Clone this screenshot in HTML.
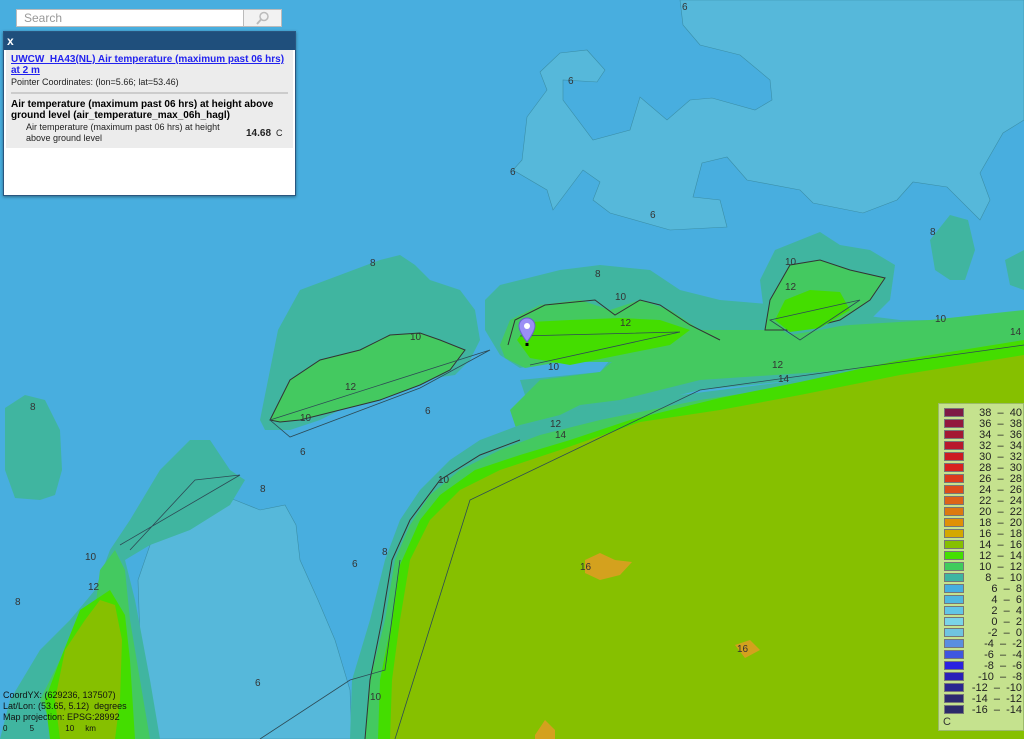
<!DOCTYPE html>
<html><head><meta charset="utf-8"><style>
html,body{margin:0;padding:0;width:1024px;height:739px;overflow:hidden;background:#48aedf;font-family:"Liberation Sans",sans-serif}
svg.map{position:absolute;left:0;top:0}
.search{position:absolute;left:16px;top:9px;width:219px;height:16px;border:1px solid #bbb;background:#fff;font-size:12px;color:#999;line-height:16px;padding-left:7px;box-sizing:content-box}
.sbtn{position:absolute;left:243px;top:9px;width:37px;height:16px;border:1px solid #bbb;background:#f2f2f2}
.pop{position:absolute;left:3px;top:31px;width:291px;height:163px;background:#fff;border:1px solid #2a5680;box-shadow:0 1px 3px rgba(0,0,0,.4)}
.pop .hd{height:18px;background:#1f4f7c;color:#fff;font-weight:bold;font-size:12px;line-height:18px;padding-left:3px}
.pop .bd{margin:0 2px;background:#ececec;padding:4px 5px 4px;font-size:9px;color:#222}
.pop a{color:#2222ee;font-weight:bold;font-size:10px;text-decoration:underline;line-height:11px;display:block}
.pop hr{border:0;border-top:2px solid #ccc;margin:4px 0 5px}
.pop b.t{font-size:10px;line-height:11px;display:block;color:#000}
.row{display:flex;align-items:center;padding-left:15px;line-height:11px;margin-top:1px;font-size:9px}
.leg{position:absolute;left:938px;top:403px;width:86px;height:328px;background:#c5e28e;border:1px solid #9bbb6a;box-sizing:border-box}
.leg .r{position:absolute;left:5px;width:78px;height:10px;font-size:11px;line-height:10px;color:#222}
.leg .r i{position:absolute;left:0;top:0;width:20px;height:9px;border:1px solid #777;box-sizing:border-box}
.leg .r span{position:absolute;right:0;top:0;white-space:pre;font-family:"Liberation Sans",sans-serif}
.info{position:absolute;left:3px;top:690px;font-size:9px;line-height:11px;color:#111}
</style></head><body>
<svg class="map" width="1024" height="739" viewBox="0 0 1024 739">
<rect width="1024" height="739" fill="#48aedf"/>
<path d="M680,0 683,25 700,45 740,55 770,80 772,100 755,110 712,98 690,100 667,120 640,97 630,130 593,140 563,100 563,80 597,82 605,70 587,50 560,53 540,72 547,90 527,117 522,160 513,170 547,190 553,210 583,170 600,182 593,200 610,213 670,230 727,227 720,200 693,197 702,163 727,157 747,180 800,190 813,203 863,213 897,200 913,182 947,187 980,220 990,200 980,173 1003,133 1024,120 1024,0Z" fill="#56b8da" stroke="#3b8fa8" stroke-width=".6"/>
<path d="M195,505 215,495 235,500 260,510 285,505 296,525 300,560 318,600 335,640 350,690 352,739 130,739 135,700 140,640 138,580 150,545 172,520Z" fill="#56b8da" stroke="#3b8fa8" stroke-width=".6"/>
<path d="M5,408 25,395 45,400 60,430 62,470 55,495 40,500 15,498 5,470Z" fill="#40b5a0"/>
<path d="M260,420 268,380 278,330 300,290 340,275 380,260 400,255 415,265 430,280 460,290 475,310 480,340 470,360 455,375 420,380 390,395 350,405 320,420 290,430 265,430Z" fill="#40b5a0"/>
<path d="M270,420 290,380 320,360 360,350 390,335 420,333 440,340 465,350 450,370 420,385 380,400 340,410 300,420 280,422Z" fill="#44c960" stroke="#333" stroke-width="1"/>
<path d="M485,300 500,285 560,270 600,265 650,270 680,290 720,300 780,305 820,310 900,320 1024,320 1024,360 940,370 800,380 700,390 620,410 560,420 540,408 525,395 520,380 600,372 610,360 560,360 520,368 500,355 485,330Z" fill="#40b5a0"/>
<path d="M500,345 510,320 540,305 580,300 610,310 640,300 670,310 700,330 750,330 800,330 850,325 930,320 1024,310 1024,345 950,360 850,370 700,380 620,400 580,405 550,420 520,440 510,410 540,380 600,372 612,362 560,362 525,368 505,358Z" fill="#44c960"/>
<path d="M517,340 530,322 570,320 620,318 660,320 690,330 670,345 620,355 570,365 530,358Z" fill="#44dd00"/>
<path d="M508,345 515,320 545,305 595,300 615,315 640,300 660,305 690,325 720,340" fill="none" stroke="#333" stroke-width="1"/>
<path d="M760,280 775,250 800,240 820,232 840,245 870,250 895,265 890,300 870,320 820,330 790,335 765,320Z" fill="#40b5a0"/>
<path d="M765,330 770,300 790,265 820,260 850,270 885,278 870,300 840,320 800,330Z" fill="#44c960" stroke="#333" stroke-width="1"/>
<path d="M775,320 785,300 810,290 840,292 850,310 820,328 790,332Z" fill="#44dd00"/>
<path d="M930,240 950,215 968,220 975,250 965,280 950,280 935,270Z" fill="#40b5a0"/>
<path d="M1005,260 1024,250 1024,290 1010,285Z" fill="#40b5a0"/>
<path d="M230,470 210,440 190,440 160,470 130,520 110,550 95,590 70,620 40,650 10,700 0,739 160,739 150,680 135,600 125,560 150,545 190,530 230,505 245,480Z" fill="#40b5a0"/>
<path d="M60,739 40,700 70,640 95,610 100,570 115,550 125,570 130,620 140,680 150,739Z" fill="#44c960"/>
<path d="M50,739 45,700 60,660 80,610 95,600 110,590 125,615 130,660 135,739Z" fill="#44dd00"/>
<path d="M60,739 55,700 65,650 85,620 100,600 115,605 122,640 120,700 115,739Z" fill="#86c000"/>
<path d="M350,739 352,680 370,620 385,560 400,520 420,490 450,460 480,440 520,425 560,415 640,400 720,390 800,380 900,365 1024,345 1024,739Z" fill="#40b5a0"/>
<path d="M365,739 370,680 385,620 395,560 410,525 430,495 460,470 500,450 540,435 600,420 700,400 800,385 900,370 1024,350 1024,739Z" fill="#44c960"/>
<path d="M378,739 380,680 392,620 400,565 420,520 440,495 475,470 520,455 570,440 630,420 720,398 800,382 900,360 1024,340 1024,739Z" fill="#44dd00"/>
<path d="M390,739 392,680 400,620 410,560 430,520 460,490 500,470 560,450 640,422 720,410 800,395 900,375 1024,355 1024,739Z" fill="#86c000"/>
<path d="M365,739 370,680 382,620 392,560 410,520 440,480 480,455 520,440" fill="none" stroke="#333" stroke-width="1"/>
<path d="M585,560 600,553 615,560 632,562 620,575 600,580 585,573Z" fill="#d4a11e"/>
<path d="M735,645 750,640 760,650 745,658Z" fill="#d4a11e"/>
<path d="M535,735 545,720 555,730 555,739 535,739Z" fill="#d4a11e"/>
<g fill="none" stroke="#2d4a55" stroke-width=".8">
<path d="M270,420 490,350 420,388 290,437Z"/>
<path d="M120,545 240,475 195,480 130,550"/>
<path d="M395,739 470,500 700,390 1024,345"/>
<path d="M520,336 680,332 530,365"/>
<path d="M770,320 860,300 800,340Z"/>
<path d="M260,739 350,680 385,670 400,560"/>
</g>
<g font-size="10" fill="#333" font-family="Liberation Sans,sans-serif">
<text x="370" y="266">8</text><text x="410" y="340">10</text><text x="300" y="421">10</text><text x="345" y="390">12</text>
<text x="595" y="277">8</text><text x="615" y="300">10</text><text x="620" y="326">12</text><text x="548" y="370">10</text>
<text x="785" y="265">10</text><text x="785" y="290">12</text><text x="935" y="322">10</text><text x="772" y="368">12</text><text x="778" y="382">14</text>
<text x="550" y="427">12</text><text x="555" y="438">14</text><text x="438" y="483">10</text>
<text x="650" y="218">6</text><text x="568" y="84">6</text><text x="510" y="175">6</text><text x="682" y="10">6</text>
<text x="30" y="410">8</text><text x="425" y="414">6</text><text x="300" y="455">6</text><text x="260" y="492">8</text>
<text x="85" y="560">10</text><text x="88" y="590">12</text><text x="15" y="605">8</text>
<text x="352" y="567">6</text><text x="382" y="555">8</text><text x="255" y="686">6</text><text x="370" y="700">10</text>
<text x="580" y="570">16</text><text x="737" y="652">16</text><text x="930" y="235">8</text><text x="1010" y="335">14</text>
</g>
<path d="M527,318c-5,0-8,4-8,8c0,6,8,16,8,16s8-10,8-16c0-4-3-8-8-8z" fill="#9b8ff5" stroke="#6a5fd0" stroke-width="1"/>
<circle cx="527" cy="326" r="3" fill="#fff"/><rect x="525.5" y="343" width="3" height="3" fill="#000"/>
</svg>
<div class="search">Search</div>
<div class="sbtn"><svg width="37" height="16"><circle cx="20" cy="6.5" r="4" fill="none" stroke="#bbb" stroke-width="1.5"/><path d="M17,9.5 13,14" stroke="#bbb" stroke-width="2"/></svg></div>
<div class="pop"><div class="hd">x</div>
<div class="bd"><a>UWCW_HA43(NL) Air temperature (maximum past 06 hrs) at 2 m</a>
<div style="line-height:12px">Pointer Coordinates: (lon=5.66; lat=53.46)</div><hr>
<b class="t">Air temperature (maximum past 06 hrs) at height above ground level (air_temperature_max_06h_hagl)</b>
<div class="row"><div style="width:220px">Air temperature (maximum past 06 hrs) at height above ground level</div><b style="font-size:10px">14.68</b>&nbsp;&nbsp;C</div>
</div></div>
<div class="leg">
<div class="r" style="top:4px"><i style="background:#7d1a45"></i><span>38  –  40</span></div>
<div class="r" style="top:15px"><i style="background:#92183d"></i><span>36  –  38</span></div>
<div class="r" style="top:26px"><i style="background:#a31833"></i><span>34  –  36</span></div>
<div class="r" style="top:37px"><i style="background:#b8182c"></i><span>32  –  34</span></div>
<div class="r" style="top:48px"><i style="background:#cc1a22"></i><span>30  –  32</span></div>
<div class="r" style="top:59px"><i style="background:#d8221e"></i><span>28  –  30</span></div>
<div class="r" style="top:70px"><i style="background:#dc3a1c"></i><span>26  –  28</span></div>
<div class="r" style="top:81px"><i style="background:#dc4e1a"></i><span>24  –  26</span></div>
<div class="r" style="top:92px"><i style="background:#dc6418"></i><span>22  –  24</span></div>
<div class="r" style="top:103px"><i style="background:#dc7a10"></i><span>20  –  22</span></div>
<div class="r" style="top:114px"><i style="background:#e09006"></i><span>18  –  20</span></div>
<div class="r" style="top:125px"><i style="background:#d4a800"></i><span>16  –  18</span></div>
<div class="r" style="top:136px"><i style="background:#86c000"></i><span>14  –  16</span></div>
<div class="r" style="top:147px"><i style="background:#44e000"></i><span>12  –  14</span></div>
<div class="r" style="top:158px"><i style="background:#40cc5c"></i><span>10  –  12</span></div>
<div class="r" style="top:169px"><i style="background:#3eb5a2"></i><span>8  –  10</span></div>
<div class="r" style="top:180px"><i style="background:#46aee0"></i><span>6  –  8</span></div>
<div class="r" style="top:191px"><i style="background:#50b8df"></i><span>4  –  6</span></div>
<div class="r" style="top:202px"><i style="background:#62c6e6"></i><span>2  –  4</span></div>
<div class="r" style="top:213px"><i style="background:#7ad4e8"></i><span>0  –  2</span></div>
<div class="r" style="top:224px"><i style="background:#70c4e0"></i><span>-2  –  0</span></div>
<div class="r" style="top:235px"><i style="background:#5a8ee0"></i><span>-4  –  -2</span></div>
<div class="r" style="top:246px"><i style="background:#3e56e0"></i><span>-6  –  -4</span></div>
<div class="r" style="top:257px"><i style="background:#2a22e0"></i><span>-8  –  -6</span></div>
<div class="r" style="top:268px"><i style="background:#2a20b8"></i><span>-10  –  -8</span></div>
<div class="r" style="top:279px"><i style="background:#2a2690"></i><span>-12  –  -10</span></div>
<div class="r" style="top:290px"><i style="background:#2c2a70"></i><span>-14  –  -12</span></div>
<div class="r" style="top:301px"><i style="background:#2c2a6a"></i><span>-16  –  -14</span></div>
<div style="position:absolute;left:4px;top:312px;font-size:11px;color:#333">C</div>
</div>
<div class="info">CoordYX: (629236, 137507)<br>Lat/Lon: (53.65, 5.12)&nbsp; degrees<br>Map projection: EPSG:28992<br><span style="font-size:8px">0&nbsp;&nbsp;&nbsp;&nbsp;&nbsp;&nbsp;&nbsp;&nbsp;&nbsp;&nbsp;5&nbsp;&nbsp;&nbsp;&nbsp;&nbsp;&nbsp;&nbsp;&nbsp;&nbsp;&nbsp;&nbsp;&nbsp;&nbsp;&nbsp;10&nbsp;&nbsp;&nbsp;&nbsp;&nbsp;km</span></div>
</body></html>
